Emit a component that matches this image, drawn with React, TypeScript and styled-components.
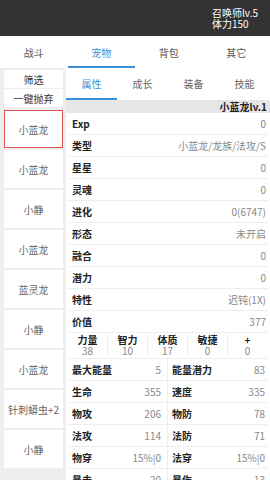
import React from "react";
import styled, { createGlobalStyle } from "styled-components";

const Global = createGlobalStyle`
  html, body { margin: 0; padding: 0; }
  body {
    width: 270px; height: 480px; overflow: hidden;
    font-family: "Noto Sans CJK SC", "Noto Sans", sans-serif;
    background: #eeeeee;
  }
  * { box-sizing: border-box; }
`;

const Page = styled.div`
  width: 270px;
  height: 480px;
  display: flex;
  flex-direction: column;
  overflow: hidden;
  background: #eeeeee;
`;

const Header = styled.div`
  height: 36px;
  flex-shrink: 0;
  background: #333333;
  display: flex;
  justify-content: flex-end;
  align-items: center;
  padding-right: 12px;
`;

const PlayerInfo = styled.div`
  color: #ffffff;
  font-size: 10px;
  line-height: 11px;
  display: flex;
  flex-direction: column;
`;

const TabBar = styled.div`
  height: 32px;
  flex-shrink: 0;
  background: #ffffff;
  display: grid;
  grid-template-columns: repeat(4, 1fr);
`;

const Tab = styled.div<{ $active?: boolean }>`
  display: flex;
  align-items: center;
  justify-content: center;
  font-size: 10px;
  color: ${(p) => (p.$active ? "#3b8fd9" : "#555555")};
  border-bottom: 2px solid ${(p) => (p.$active ? "#3b8fd9" : "transparent")};
  padding-top: 2px;
`;

const Body = styled.div`
  flex: 1;
  display: flex;
  min-height: 0;
`;

const Side = styled.div`
  width: 66px;
  flex-shrink: 0;
  padding: 2px 3px 0 4px;
  display: flex;
  flex-direction: column;
  gap: 1px;
`;

const SideButton = styled.div`
  height: 18px;
  flex-shrink: 0;
  background: #ffffff;
  display: flex;
  align-items: center;
  justify-content: center;
  font-size: 10px;
  color: #333333;
`;

const PetList = styled.div`
  margin-top: 2px;
  display: flex;
  flex-direction: column;
  gap: 2px;
`;

const PetItem = styled.div<{ $selected?: boolean }>`
  height: 38px;
  flex-shrink: 0;
  background: #ffffff;
  display: flex;
  align-items: center;
  justify-content: center;
  font-size: 10px;
  color: #666666;
  white-space: nowrap;
  border: 1px solid ${(p) => (p.$selected ? "#d9534f" : "transparent")};
`;

const Panel = styled.div`
  flex: 1;
  background: #ffffff;
  display: flex;
  flex-direction: column;
  min-width: 0;
`;

const SubTabBar = styled.div`
  height: 32px;
  flex-shrink: 0;
  display: grid;
  grid-template-columns: repeat(4, 1fr);
  background: #ffffff;
`;

const SubTab = styled.div<{ $active?: boolean }>`
  display: flex;
  align-items: center;
  justify-content: center;
  font-size: 10px;
  color: ${(p) => (p.$active ? "#3b8fd9" : "#666666")};
  border-bottom: 2px solid ${(p) => (p.$active ? "#3b8fd9" : "transparent")};
`;

const TitleRow = styled.div`
  height: 13px;
  flex-shrink: 0;
  background: #e6e6e6;
  display: flex;
  align-items: center;
  justify-content: flex-end;
  padding-right: 3px;
  font-size: 10px;
  font-weight: bold;
  color: #222222;
`;

const Rows = styled.div`
  display: flex;
  flex-direction: column;
  flex-shrink: 0;
  padding: 0 2px;
`;

const Row = styled.div`
  height: 22px;
  flex-shrink: 0;
  display: flex;
  align-items: center;
  justify-content: space-between;
  border-bottom: 1px solid #eeeeee;
  padding: 0 2px 0 4px;
  font-size: 10px;
`;

const Label = styled.span`
  font-weight: bold;
  color: #222222;
`;

const Value = styled.span`
  color: #888888;
  white-space: nowrap;
`;

const StatGrid = styled.div`
  display: grid;
  grid-template-columns: repeat(5, 1fr);
  border-bottom: 1px solid #eeeeee;
  padding: 1px 0 2px;
`;

const StatCell = styled.div<{ $last?: boolean }>`
  display: flex;
  flex-direction: column;
  align-items: center;
  font-size: 10px;
  line-height: 11px;
  border-right: 1px solid ${(p) => (p.$last ? "transparent" : "#eeeeee")};
`;

const PairGrid = styled.div`
  display: grid;
  grid-template-columns: 1fr 1fr;
`;

const PairCell = styled(Row)<{ $left?: boolean }>`
  border-right: 1px solid ${(p) => (p.$left ? "#eeeeee" : "transparent")};
  padding: 0 ${(p) => (p.$left ? "6px" : "2px")} 0 4px;
`;

const mainTabs = ["战斗", "宠物", "背包", "其它"];
const subTabs = ["属性", "成长", "装备", "技能"];
const pets = ["小蓝龙", "小蓝龙", "小静", "小蓝龙", "蓝灵龙", "小静", "小蓝龙", "针刺蟒虫+2", "小静"];
const rows: [string, string][] = [
  ["Exp", "0"],
  ["类型", "小蓝龙/龙族/法攻/S"],
  ["星星", "0"],
  ["灵魂", "0"],
  ["进化", "0(6747)"],
  ["形态", "未开启"],
  ["融合", "0"],
  ["潜力", "0"],
  ["特性", "迟钝(1X)"],
  ["价值", "377"],
];
const stats: [string, string][] = [
  ["力量", "38"],
  ["智力", "10"],
  ["体质", "17"],
  ["敏捷", "0"],
  ["+", "0"],
];
const pairs: [string, string][] = [
  ["最大能量", "5"],
  ["能量潜力", "83"],
  ["生命", "355"],
  ["速度", "335"],
  ["物攻", "206"],
  ["物防", "78"],
  ["法攻", "114"],
  ["法防", "71"],
  ["物穿", "15%|0"],
  ["法穿", "15%|0"],
  ["暴击", "20"],
  ["暴伤", "13"],
];

export default function App() {
  return (
    <>
      <Global />
      <Page>
        <Header>
          <PlayerInfo>
            <span>召唤师lv.5</span>
            <span>体力150</span>
          </PlayerInfo>
        </Header>
        <TabBar>
          {mainTabs.map((t, i) => (
            <Tab key={t} $active={i === 1}>{t}</Tab>
          ))}
        </TabBar>
        <Body>
          <Side>
            <SideButton>筛选</SideButton>
            <SideButton>一键抛弃</SideButton>
            <PetList>
              {pets.map((p, i) => (
                <PetItem key={i} $selected={i === 0}>{p}</PetItem>
              ))}
            </PetList>
          </Side>
          <Panel>
            <SubTabBar>
              {subTabs.map((t, i) => (
                <SubTab key={t} $active={i === 0}>{t}</SubTab>
              ))}
            </SubTabBar>
            <TitleRow>小蓝龙lv.1</TitleRow>
            <Rows>
              {rows.map(([l, v]) => (
                <Row key={l}>
                  <Label>{l}</Label>
                  <Value>{v}</Value>
                </Row>
              ))}
              <StatGrid>
                {stats.map(([l, v], i) => (
                  <StatCell key={l} $last={i === stats.length - 1}>
                    <Label>{l}</Label>
                    <Value>{v}</Value>
                  </StatCell>
                ))}
              </StatGrid>
              <PairGrid>
                {pairs.map(([l, v], i) => (
                  <PairCell key={l} $left={i % 2 === 0}>
                    <Label>{l}</Label>
                    <Value>{v}</Value>
                  </PairCell>
                ))}
              </PairGrid>
            </Rows>
          </Panel>
        </Body>
      </Page>
    </>
  );
}
